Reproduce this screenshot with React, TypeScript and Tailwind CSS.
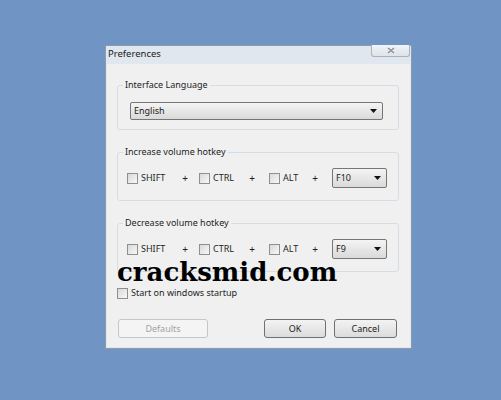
import React from "react";

const ui = { fontFamily: '"Noto Sans", "Liberation Sans", sans-serif' };

function Check() {
  return (
    <span className="inline-block w-[11px] h-[11px] shrink-0 border border-[#8e8f8f] bg-linear-to-br from-[#d9d9d9] to-[#f8f8f8]" />
  );
}

function Arrow() {
  return (
    <svg width="7" height="4" viewBox="0 0 7 4">
      <path d="M0 0 L7 0 L3.5 4 Z" fill="#111" />
    </svg>
  );
}

function Combo({ value, w, h }: { value: string; w: string; h: string }) {
  return (
    <div
      className={`${w} ${h} flex items-center justify-between border border-[#767676] rounded-[2px] bg-linear-to-b from-[#f4f4f4] to-[#dadada] pl-[3px] pr-[5px] text-[9px] text-[#1b1b1b]`}
    >
      <span>{value}</span>
      <Arrow />
    </div>
  );
}

function Hotkey({ label, keyName }: { label: string; keyName: string }) {
  const mods = [
    { name: "SHIFT", w: "w-[53px]", gap: "" },
    { name: "CTRL", w: "w-[48px]", gap: "ml-[9px]" },
    { name: "ALT", w: "w-[41px]", gap: "ml-[12px]" },
  ];
  return (
    <div className="ml-[10px] w-[282px] h-[49px] border border-[#d6dee5] rounded-[3px]">
      <div className="-mt-[8px] ml-[5px] px-[2px] w-fit bg-[#f0f0f0] leading-[14px] text-[9px] text-[#1e1e1e]">
        {label}
      </div>
      <div className="mt-[9px] pl-[9px] h-[20px] flex items-center text-[9px] text-[#1e1e1e]">
        {mods.map((m) => (
          <React.Fragment key={m.name}>
            <div className={`${m.w} ${m.gap} flex items-center gap-[3px]`}>
              <Check />
              <span>{m.name}</span>
            </div>
            <span className="w-[10px] text-center text-[10px]">+</span>
          </React.Fragment>
        ))}
        <div className="ml-[12px]">
          <Combo value={keyName} w="w-[55px]" h="h-[20px]" />
        </div>
      </div>
    </div>
  );
}

export default function App() {
  return (
    <div className="w-[501px] h-[400px] bg-[#7095c4] pt-[45px] pl-[105px]" style={ui}>
      <div className="w-[307px] h-[304px] flex flex-col border border-[#8d9bad] bg-[#e1e7ee] px-[1px] pb-[1px]">
        {/* title bar */}
        <div className="h-[18px] flex items-start justify-between">
          <span className="pl-[1px] pt-[1px] text-[9.5px] leading-[14px] text-[#1a1a1a]">Preferences</span>
          <div className="-mt-[1px] w-[39px] h-[12px] flex items-center justify-center border border-t-0 border-[#a8b3c1] rounded-b-[3px] bg-linear-to-b from-[#f1f4f7] to-[#dde3ea]">
            <svg width="8" height="7" viewBox="0 0 8 7">
              <path d="M1 1 L7 6 M7 1 L1 6" stroke="#8c8f94" strokeWidth="1.4" fill="none" />
            </svg>
          </div>
        </div>

        {/* client area */}
        <div className="relative flex-1 bg-[#f0f0f0] flex flex-col">
          <div className="mt-[21px] ml-[10px] w-[282px] h-[45px] border border-[#d6dee5] rounded-[3px]">
            <div className="-mt-[8px] ml-[5px] px-[2px] w-fit bg-[#f0f0f0] leading-[14px] text-[9px] text-[#1e1e1e]">
              Interface Language
            </div>
            <div className="mt-[10px] ml-[12px]">
              <Combo value="English" w="w-[253px]" h="h-[18px]" />
            </div>
          </div>

          <div className="mt-[22px]">
            <Hotkey label="Increase volume hotkey" keyName="F10" />
          </div>
          <div className="mt-[22px]">
            <Hotkey label="Decrease volume hotkey" keyName="F9" />
          </div>

          <div className="mt-[14px] ml-[10px] h-[14px] flex items-center gap-[3px] text-[9px] text-[#1e1e1e]">
            <Check />
            <span>Start on windows startup</span>
          </div>

          <div className="mt-[19px] pl-[11px] flex text-[9px]">
            <button className="w-[90px] h-[19px] border border-[#c6c6c6] rounded-[3px] bg-[#f4f4f4] text-[#a2a2a2]">
              Defaults
            </button>
            <button className="ml-[56px] w-[62px] h-[19px] border border-[#707070] rounded-[3px] bg-linear-to-b from-[#f3f3f3] to-[#dcdcdc] text-[#1b1b1b]">
              OK
            </button>
            <button className="ml-[8px] w-[63px] h-[19px] border border-[#707070] rounded-[3px] bg-linear-to-b from-[#f3f3f3] to-[#dcdcdc] text-[#1b1b1b]">
              Cancel
            </button>
          </div>

          {/* watermark over the dialog */}
          <div
            className="absolute left-[10px] top-[195px] text-[26px] leading-[26px] font-bold text-black"
            style={{ fontFamily: '"DejaVu Serif", "Liberation Serif", serif' }}
          >
            cracksmid.com
          </div>
        </div>
      </div>
    </div>
  );
}
